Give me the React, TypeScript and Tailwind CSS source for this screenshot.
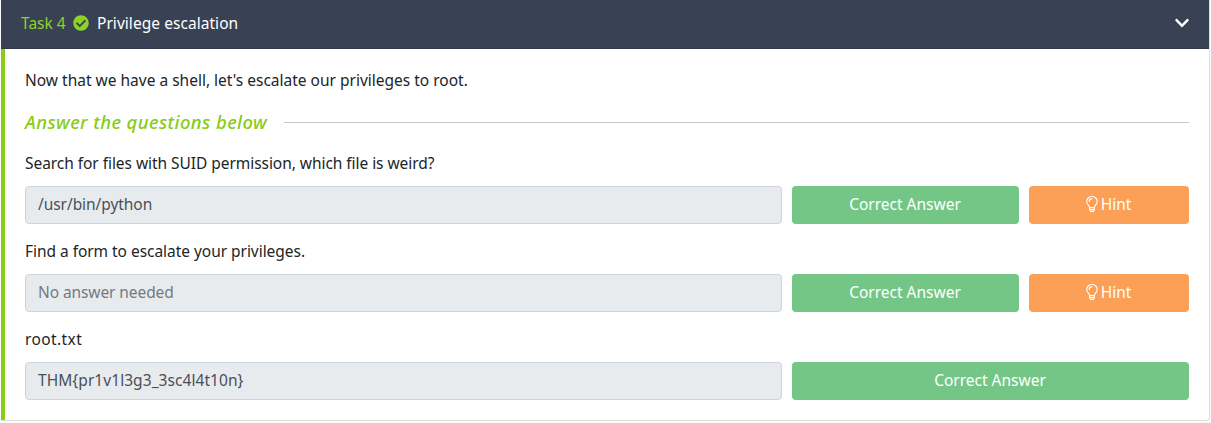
import { FaCheckCircle, FaChevronDown } from "react-icons/fa";

function Bulb() {
  return (
    <svg viewBox="0 0 12 16" className="h-4 w-3 shrink-0" fill="none" stroke="currentColor" strokeWidth="1.1" strokeLinejoin="round" strokeLinecap="round">
      <path d="M3.7 11.5C3.5 9.3.7 8.5.7 5.6a5.3 5.1 0 0 1 10.6 0c0 2.9-2.8 3.7-3 5.9z" />
      <path d="M3.7 11.5v2.7l1 1.2h2.6l1-1.2v-2.7M3.7 13.4h4.6M3.2 5.4c0-1.5 1.1-2.5 2.6-2.5" />
    </svg>
  );
}

type Question = {
  text: string;
  textClass: string;
  answer?: string;
  answerClass: string;
  hint: boolean;
};

const questions: Question[] = [
  {
    text: "Search for files with SUID permission, which file is weird?",
    textClass: "tracking-[-0.05px]",
    answer: "/usr/bin/python",
    answerClass: "tracking-[-0.06px]",
    hint: true,
  },
  {
    text: "Find a form to escalate your privileges.",
    textClass: "tracking-[-0.04px]",
    answerClass: "tracking-[-0.09px]",
    hint: true,
  },
  {
    text: "root.txt",
    textClass: "tracking-[0.4px]",
    answer: "THM{pr1v1l3g3_3sc4l4t10n}",
    answerClass: "tracking-[0.06px]",
    hint: false,
  },
];

function QuestionRow({ text, textClass, answer, answerClass, hint }: Question) {
  return (
    <div>
      <p className={`h-6 ${textClass}`}>{text}</p>
      <div className="mt-[11px] flex h-[38px] gap-2.5 text-white">
        <div
          className={`flex w-[757px] items-center rounded border border-[#ced4da] bg-[#e8ebee] px-3 pb-0.5 ${answerClass} ${answer ? "text-[#495057]" : "text-[#737a80]"}`}
        >
          {answer ?? "No answer needed"}
        </div>
        <button className={`rounded bg-[#73c686] pr-px pb-0.5 ${hint ? "w-[227px]" : "w-[397px]"}`}>Correct Answer</button>
        {hint && (
          <button className="flex w-40 items-center justify-center gap-[3px] rounded bg-[#fca057] pr-px pb-0.5">
            <Bulb />
            Hint
          </button>
        )}
      </div>
    </div>
  );
}

export default function App() {
  return (
    <div className="h-[423px] overflow-hidden bg-[#fafafa] pl-px pr-px font-['Noto_Sans','Open_Sans',sans-serif] text-[15.5px] leading-6 text-[#212529]">
      <div className="h-[421px] overflow-hidden rounded-br border-r border-b border-[#dfdfdf] bg-white">
        <header className="flex h-[49px] items-center border-b border-[#303a4a] bg-[#384254] pr-[19px] pl-5 text-white">
          <span className="h-6 -translate-y-px text-[#8fd129]">Task 4</span>
          <FaCheckCircle className="ml-[7.3px] size-4 -translate-y-px text-[#8fd129]" />
          <h1 className="ml-2 h-6 -translate-y-px tracking-[0.05px]">Privilege escalation</h1>
          <FaChevronDown className="ml-auto size-4 -translate-y-px" />
        </header>
        <main className="h-[371px] border-l-4 border-[#88cc14] pt-[19px] pl-5">
          <p className="h-6">Now that we have a shell, let's escalate our privileges to root.</p>
          <div className="mt-[15px] flex h-[30px] w-[1164px] items-center">
            <h2 className="w-[259px] whitespace-nowrap text-[18.5px] font-medium tracking-[0.4px] text-[#88cc14] italic">Answer the questions below</h2>
            <div className="h-px flex-1 bg-[#c8c8c8]" />
          </div>
          <div className="mt-[14px] flex flex-col gap-[15px]">
            {questions.map((q) => (
              <QuestionRow key={q.text} {...q} />
            ))}
          </div>
        </main>
      </div>
    </div>
  );
}
